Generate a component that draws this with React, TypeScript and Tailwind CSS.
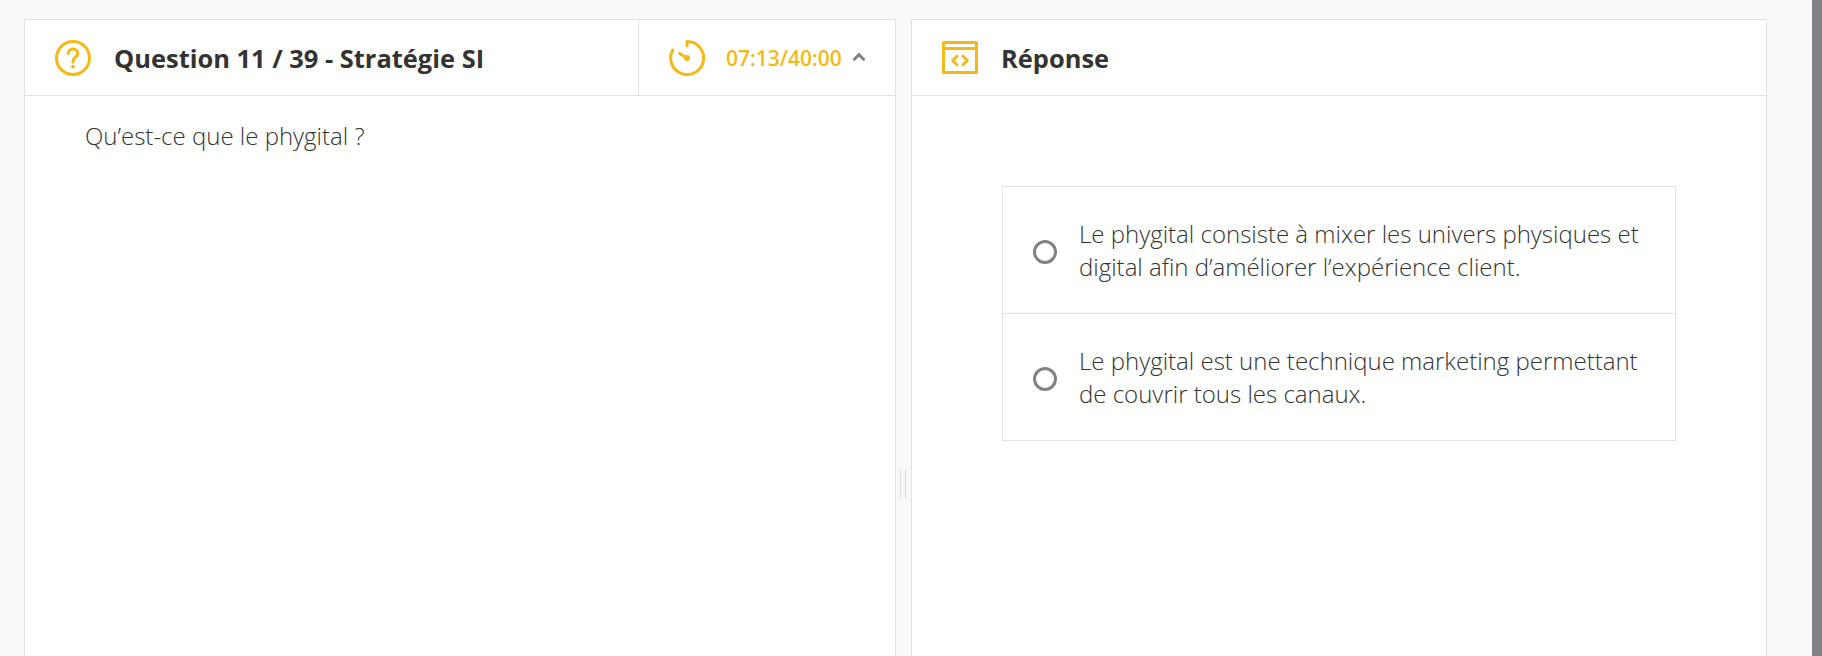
import type { ReactNode } from 'react';

const answers: string[][] = [
  ['Le phygital consiste à mixer les univers physiques et', 'digital afin d’améliorer l’expérience client.'],
  ['Le phygital est une technique marketing permettant', 'de couvrir tous les canaux.'],
];

function QuestionIcon() {
  return (
    <svg className="size-9 shrink-0" viewBox="0 0 36 36" fill="none" stroke="#f3b916" strokeWidth="3" strokeLinecap="round">
      <circle cx="18" cy="18" r="16.5" />
      <path d="M13.2 13.6C13.2 10.9 15.2 9 18 9s4.8 1.9 4.8 4.5c0 3.4-4.8 4-4.8 8v.7" />
      <circle cx="18" cy="26.7" r="1.9" fill="#f3b916" stroke="none" />
    </svg>
  );
}

function TimerIcon() {
  return (
    <svg className="size-9 shrink-0" viewBox="0 0 36 36" fill="none" stroke="#f3b916" strokeWidth="3" strokeLinecap="round" strokeLinejoin="round">
      <path d="M18 5.8V1.5A16.5 16.5 0 1 1 3.7 10" />
      <path d="M10.7 13.4L18 18" />
      <circle cx="18" cy="18" r="3" fill="#f3b916" stroke="none" />
    </svg>
  );
}

function CodeIcon() {
  return (
    <svg className="size-9 shrink-0" viewBox="0 0 36 36" fill="none" stroke="#f3b916" strokeWidth="3" strokeLinecap="round" strokeLinejoin="round">
      <path d="M1.5 2.5h33v30h-33zM1.5 8.5h33" />
      <path d="M15 16.2l-4.4 4.3 4.4 4.3M21 16.2l4.4 4.3-4.4 4.3" />
    </svg>
  );
}

function Title({ icon, children }: { icon: ReactNode; children: ReactNode }) {
  return (
    <div className="flex flex-1 items-center gap-[23px] pt-px pl-[30px]">
      {icon}
      <h2 className="text-[25.45px] leading-9 font-bold whitespace-nowrap text-[#333333]">{children}</h2>
    </div>
  );
}

export default function App() {
  return (
    <div className="flex h-[656px] w-[1822px] overflow-hidden bg-[#f9f9f9] pl-6 font-['Open_Sans',sans-serif] text-[#333333]">
      <section className="mt-[19px] flex w-[872px] flex-col border border-b-0 border-[#e2e2e2] bg-white">
        <header className="flex h-[76px] border-b border-[#e2e2e2]">
          <Title icon={<QuestionIcon />}>Question 11 / 39 - Stratégie SI</Title>
          <div className="flex w-[257px] items-center border-l border-[#e2e2e2] pt-px pl-[30px]">
            <TimerIcon />
            <span className="ml-[21px] w-[116px] text-[21px] leading-9 font-semibold whitespace-nowrap text-[#f3b916]">07:13/40:00</span>
            <svg className="mb-[3px] ml-[10px] h-3 w-[14px]" viewBox="0 0 14 12" fill="none" stroke="#808285" strokeWidth="3" strokeLinecap="round" strokeLinejoin="miter">
              <path d="M2.4 8.3L7 3.7l4.6 4.6" />
            </svg>
          </div>
        </header>
        <p className="pt-[23px] pl-[60px] text-[24px] leading-[33px] font-light">Qu’est-ce que le phygital ?</p>
      </section>

      <div className="flex w-[15px] items-start gap-1 pt-[469px] pl-1">
        <span className="h-[30px] w-px bg-[#dcdcdc]" />
        <span className="h-[30px] w-px bg-[#dcdcdc]" />
      </div>

      <section className="mt-[19px] flex w-[856px] flex-col border border-b-0 border-[#e2e2e2] bg-white">
        <header className="flex h-[76px] border-b border-[#e2e2e2]">
          <Title icon={<CodeIcon />}>Réponse</Title>
        </header>
        <ul className="mt-[90px] ml-[90px] w-[674px] divide-y divide-[#e2e2e2] border border-[#e2e2e2]">
          {answers.map((lines) => (
            <li key={lines[0]} className="flex items-center py-[30px] pl-[30px]">
              <span className="mt-1 size-6 shrink-0 rounded-full border-3 border-[#808285]" />
              <p className="ml-[22px] text-[24px] leading-[33px] font-light whitespace-nowrap">
                {lines[0]}
                <br />
                {lines[1]}
              </p>
            </li>
          ))}
        </ul>
      </section>

      <div className="ml-auto w-[10px] bg-[#808285]" />
    </div>
  );
}
